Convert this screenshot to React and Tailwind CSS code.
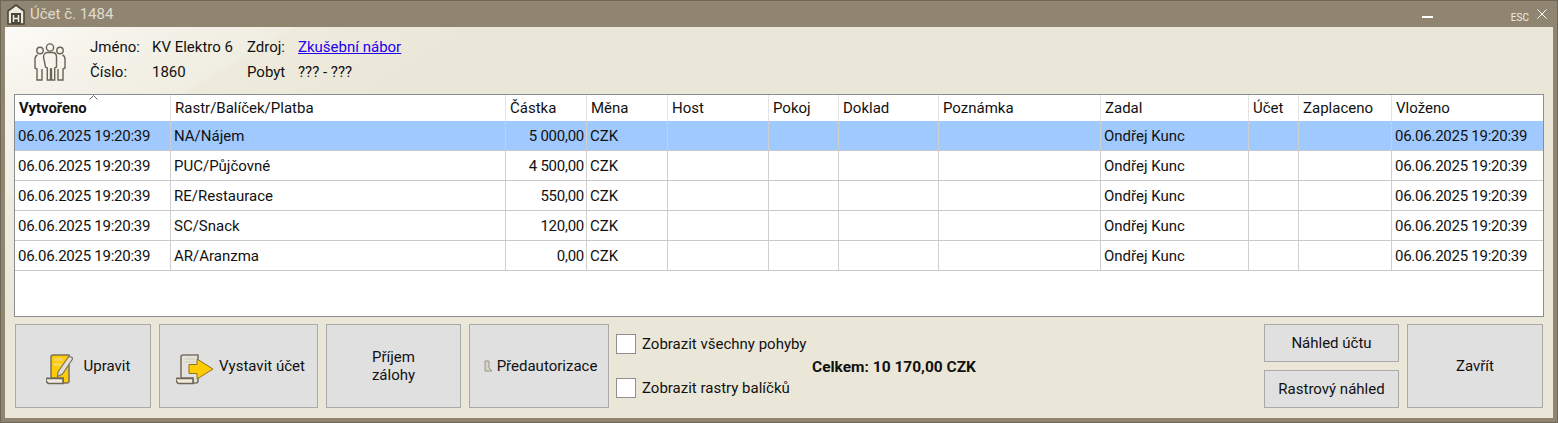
import React from 'react';

const font = { fontFamily: 'Roboto, sans-serif' };

const columns = [
  { name: 'Vytvořeno', key: 'created', tight: true },
  { name: 'Rastr/Balíček/Platba', key: 'item' },
  { name: 'Částka', key: 'amount', right: true, tight: true },
  { name: 'Měna', key: 'currency' },
  { name: 'Host', key: 'guest' },
  { name: 'Pokoj', key: 'room' },
  { name: 'Doklad', key: 'doc' },
  { name: 'Poznámka', key: 'note' },
  { name: 'Zadal', key: 'user' },
  { name: 'Účet', key: 'account' },
  { name: 'Zaplaceno', key: 'paid' },
  { name: 'Vloženo', key: 'inserted', tight: true },
];

const rows = [
  { item: 'NA/Nájem', amount: '5 000,00' },
  { item: 'PUC/Půjčovné', amount: '4 500,00' },
  { item: 'RE/Restaurace', amount: '550,00' },
  { item: 'SC/Snack', amount: '120,00' },
  { item: 'AR/Aranzma', amount: '0,00' },
].map((r) => ({
  ...r,
  created: '06.06.2025 19:20:39',
  currency: 'CZK',
  user: 'Ondřej Kunc',
  inserted: '06.06.2025 19:20:39',
}));

const gridCols = 'grid grid-cols-[156px_335px_81px_81px_101px_70px_100px_162px_148px_50px_93px_1fr]';

const HouseIcon = () => (
  <svg width="18" height="21" viewBox="0 0 18 21" fill="none">
    <path d="M1 20V7L9 1l8 6v13Z" fill="#efece2" stroke="#4c463a" strokeWidth="1.600" strokeLinejoin="round" />
    <path d="M4 20V9h10v11Z" fill="#4c463a" />
    <path d="M6.500 11v7M11.500 11v7M6.500 14.500h5" stroke="#efece2" strokeWidth="1.500" />
  </svg>
);

const PeopleIcon = () => (
  <svg width="32" height="38" viewBox="0 0 32 38" fill="none" stroke="#6b6355" strokeWidth="1.400">
    <circle cx="16" cy="4.500" r="3.600" />
    <circle cx="6" cy="7.500" r="3.200" />
    <circle cx="26" cy="7.500" r="3.200" />
    <path d="M9.500 14c0-3 2-4.500 4-4.500h5c2 0 4 1.500 4 4.500v10l-1.800 1v12h-3.200V26h-1v11h-3.200V25l-1.800-1Z" fill="#f6f4ed" />
    <path d="M3.500 12C1.500 13 1 14.500 1 16v9l2 1v11h5V26M28.500 12c2 1 2.500 2.500 2.500 4v9l-2 1v11h-5V26" />
  </svg>
);

const EditIcon = () => (
  <svg width="28" height="31" viewBox="0 0 28 31" fill="none" className="mt-[6px]">
    <path d="M7 1h16v26a2 2 0 0 1-2 2h-4v-5H5V3a2 2 0 0 1 2-2Z" fill="#ffcb05" stroke="#7a735f" strokeWidth="1.500" />
    <path d="M8 4h9v3H8ZM8 9h7v3H8Z" fill="#f4d65a" />
    <path d="M1 28a2 2 0 0 1 2-3.500h14v5H3A2 2 0 0 1 1 28Z" fill="#efeadb" stroke="#6d6656" strokeWidth="1.500" />
    <path d="M12 18 22 3.500c1-1.500 5-.5 4.500 1.500L16.500 20l-5 2.500Z" fill="#e2dfd6" stroke="#7b7567" strokeWidth="1.200" />
  </svg>
);

const IssueIcon = () => (
  <svg width="38" height="31" viewBox="0 0 38 31" fill="none" className="mt-[6px]">
    <path d="M7 1h15v26a2 2 0 0 1-2 2h-3v-5H5V3a2 2 0 0 1 2-2Z" fill="#e4e2da" stroke="#7a7466" strokeWidth="1.600" />
    <path d="M9 5h10M9 8h10" stroke="#cfccc0" />
    <path d="M1 28a2 2 0 0 1 2-3.500h14v5H3A2 2 0 0 1 1 28Z" fill="#efeadb" stroke="#6d6656" strokeWidth="1.500" />
    <path d="M13 10.500h8V5l16 10-16 10v-5.500h-8Z" fill="#ffcb05" stroke="#8a7420" strokeWidth="1" />
  </svg>
);

const TinyPreauthIcon = () => (
  <svg width="10" height="12" viewBox="0 0 10 12" fill="none">
    <path d="M2 1h4v7l3 3H2Z" fill="#d6d3c9" stroke="#9a9586" strokeWidth="1" />
  </svg>
);

const Button = ({ className = '', children }) => (
  <button className={`flex items-center justify-center bg-[#e0e0e0] border border-[#a9a9a9] text-[15px] text-[#111] leading-[18px] ${className}`}>
    {children}
  </button>
);

const Check = ({ label }) => (
  <label className="flex items-center gap-[6px] text-[15px] text-[#111]">
    <span className="w-[20px] h-[20px] bg-white border border-[#8f8f8f]" />
    <span>{label}</span>
  </label>
);

export default function App() {
  return (
    <div style={font} className="w-[1558px] h-[423px] flex flex-col bg-[#8f8570] border border-[#6f6755] overflow-hidden text-[15px] text-[#111]">
      {/* Title bar */}
      <div className="h-[26px] shrink-0 flex items-center pl-[6px] pr-[10px]">
        <HouseIcon />
        <span className="ml-[5px] text-[15px] text-[#e0dccb]">Účet č. 1484</span>
        <span className="ml-auto mr-[78px] mt-[6px] w-[11px] h-[2px] bg-white" />
        <span className="text-[10px] text-[#f0eee6] mt-[6px] mr-[8px]">ESC</span>
        <svg width="10" height="10" viewBox="0 0 10 10" stroke="#fff" strokeWidth="1" className="mb-[1px]">
          <path d="M.5.500l9 9M9.500.500l-9 9" />
        </svg>
      </div>

      {/* Content */}
      <div className="flex-1 mx-[4px] mb-[4px] flex flex-col bg-[linear-gradient(149deg,#fcfbf8_0%,#f5f3ea_5.500%,#f0eee2_13%,#eeebdd_13.300%,#ebe7d8_22%)]">
        {/* Info */}
        <div className="h-[67px] shrink-0 flex">
          <div className="pl-[29px] pt-[16px] w-[85px]">
            <PeopleIcon />
          </div>
          <div className="grid grid-cols-[62px_95px_51px_auto] auto-rows-[25px] pt-[8px] items-center">
            <span>Jméno:</span>
            <span>KV Elektro 6</span>
            <span>Zdroj:</span>
            <a href="#" className="text-[#2200ee] underline">Zkušební nábor</a>
            <span>Číslo:</span>
            <span>1860</span>
            <span>Pobyt</span>
            <span>??? - ???</span>
          </div>
        </div>

        {/* Table */}
        <div className="ml-[9px] h-[223px] shrink-0 w-[1530px] bg-white border border-[#8a8d94]">
          <div className={`${gridCols} h-[26px] items-center`}>
            {columns.map((col, i) => (
              <div key={col.key} className={`relative h-full flex items-center pt-[1px] pl-[4px] border-r border-[#e3e3e3] last:border-r-0 ${i === 0 ? 'font-bold text-[14.800px]' : ''}`}>
                {col.name}
                {i === 0 && (
                  <svg width="9" height="5" viewBox="0 0 9 5" fill="none" stroke="#666" className="absolute left-[74px] top-0">
                    <path d="M.5 4.500l4-4 4 4" />
                  </svg>
                )}
              </div>
            ))}
          </div>
          {rows.map((row, r) => (
            <div key={row.item} className={`${gridCols} h-[30px] border-b border-[#c9c9c9] ${r === 0 ? 'bg-[#9fc9ff]' : ''}`}>
              {columns.map((col) => (
                <div
                  key={col.key}
                  className={`flex items-center pt-[1px] border-r border-[#cfcfcf] last:border-r-0 pl-[3px] pr-[2px] whitespace-nowrap ${col.right ? 'justify-end' : ''} ${col.tight ? 'tracking-[-0.25px]' : ''}`}
                >
                  {row[col.key]}
                </div>
              ))}
            </div>
          ))}
        </div>

        {/* Bottom actions */}
        <div className="flex mt-[7px] ml-[10px] h-[84px]">
          <Button className="w-[136px] gap-[10px] pl-[10px]">
            <EditIcon />
            <span>Upravit</span>
          </Button>
          <Button className="w-[159px] ml-[8px] gap-[5px] pl-[4px]">
            <IssueIcon />
            <span>Vystavit účet</span>
          </Button>
          <Button className="w-[135px] ml-[8px]">
            <span className="text-center">Příjem<br />zálohy</span>
          </Button>
          <Button className="w-[140px] ml-[8px] gap-[4px] pl-[2px]">
            <TinyPreauthIcon />
            <span>Předautorizace</span>
          </Button>
          <div className="ml-[7px] flex flex-col justify-between py-[9px] w-[191px]">
            <Check label="Zobrazit všechny pohyby" />
            <Check label="Zobrazit rastry balíčků" />
          </div>
          <div className="w-[457px] pl-[5px] pt-[32px] font-bold text-[15.500px]">
            Celkem: 10 170,00 CZK
          </div>
          <div className="flex flex-col justify-between w-[135px]">
            <Button className="h-[38px]">Náhled účtu</Button>
            <Button className="h-[38px]">Rastrový náhled</Button>
          </div>
          <Button className="w-[136px] ml-[8px]">Zavřít</Button>
        </div>
      </div>
    </div>
  );
}
